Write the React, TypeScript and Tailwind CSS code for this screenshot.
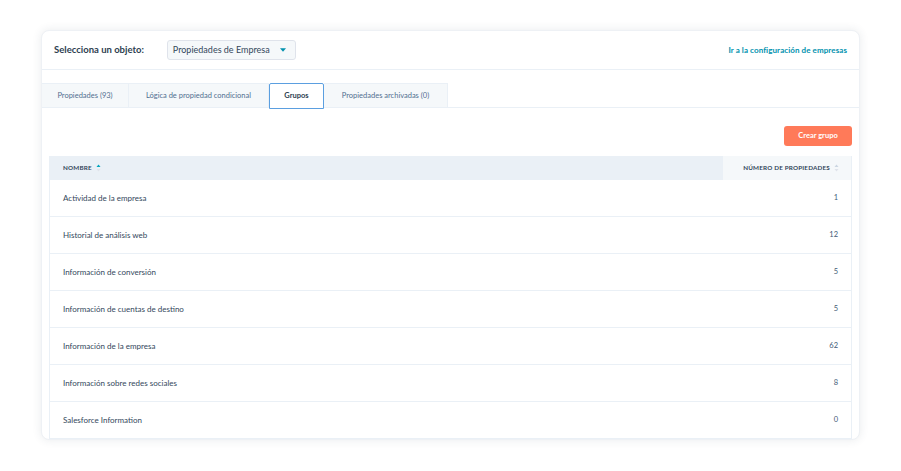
import React from "react";

const rows = [
    { name: "Actividad de la empresa", count: 1 },
    { name: "Historial de análisis web", count: 12 },
    { name: "Información de conversión", count: 5 },
    { name: "Información de cuentas de destino", count: 5 },
    { name: "Información de la empresa", count: 62 },
    { name: "Información sobre redes sociales", count: 8 },
    { name: "Salesforce Information", count: 0 },
];

const tabs = [
    { label: "Propiedades (93)", w: "w-[87px]" },
    { label: "Lógica de propiedad condicional", w: "w-[140px]" },
    { label: "Grupos", w: "w-[55px]", active: true },
    { label: "Propiedades archivadas (0)", w: "w-[124px]" },
];

const SortArrows = ({ up }: { up?: boolean }) => (
    <svg width="5" height="8" viewBox="0 0 5 8" className="ml-[4px]">
        <path d="M2.5 0.5 L4.5 3 L0.5 3 Z" fill={up ? "#00a4bd" : "#cbd6e2"} />
        <path d="M2.5 7.5 L4.5 5 L0.5 5 Z" fill="#dfe3eb" />
    </svg>
);

export default function App() {
    return (
        <div className="w-[901px] h-[471px] bg-white pt-[30px] pl-[41px] text-[#33475b]" style={{ fontFamily: "Lato, 'Noto Sans', sans-serif" }}>
            <div className="w-[819px] h-[410px] bg-white rounded-[8px] border border-[#eef1f5] shadow-[0_0_10px_rgba(40,60,80,0.10)] flex flex-col overflow-hidden">
                {/* header */}
                <div className="h-[39px] shrink-0 flex items-center px-[12px] border-b border-[#eaf0f6]">
                    <span className="text-[9.5px] font-bold text-[#2d3e50]">Selecciona un objeto:</span>
                    <div className="ml-[23px] w-[129px] h-[20px] bg-[#f5f8fa] border border-[#dfe3eb] rounded-[3px] flex items-center pl-[5px] pr-[6px] justify-between">
                        <span className="text-[9px] text-[#33475b]">Propiedades de Empresa</span>
                        <svg width="6" height="4" viewBox="0 0 7 4" className="mr-[3px]">
                            <path d="M0 0 L7 0 L3.5 4 Z" fill="#0091ae" />
                        </svg>
                    </div>
                    <a className="ml-auto text-[8px] font-bold text-[#0091ae] tracking-[0.01em]">Ir a la configuración de empresas</a>
                </div>

                {/* tabs */}
                <div className="mt-[13px] h-[25px] shrink-0 flex border-b border-[#eaf0f6]">
                    {tabs.map((t) =>
                        t.active ? (
                            <div key={t.label} className={`${t.w} h-[26px] -mb-px flex items-center justify-center bg-white border border-[#5b9fe0] rounded-t-[2px] text-[7.5px] font-bold text-[#2d3e50]`}>
                                {t.label}
                            </div>
                        ) : (
                            <div key={t.label} className={`${t.w} h-full flex items-center justify-center bg-[#f5f8fa] border-r border-t border-[#eaf0f6] text-[7.5px] text-[#516f90]`}>
                                {t.label}
                            </div>
                        )
                    )}
                </div>

                {/* body */}
                <div className="px-[7px] flex flex-col flex-1">
                    <div className="flex justify-end mt-[18px]">
                        <button className="w-[68px] h-[20px] rounded-[3px] bg-[#ff7a59] text-white text-[7.5px] font-bold">Crear grupo</button>
                    </div>
                    <div className="mt-[10px] border-l border-r border-[#eaf0f6]">
                        <div className="flex h-[24px]">
                            <div className="flex-1 bg-[#eaf0f6] flex items-center pl-[13px]">
                                <span className="text-[6.3px] font-bold tracking-[0.03em] text-[#33475b]">NOMBRE</span>
                                <SortArrows up />
                            </div>
                            <div className="w-[128px] bg-[#f5f8fa] flex items-center justify-end pr-[12px]">
                                <span className="text-[6.3px] font-bold tracking-[0.03em] text-[#33475b]">NÚMERO DE PROPIEDADES</span>
                                <SortArrows />
                            </div>
                        </div>
                        {rows.map((r) => (
                            <div key={r.name} className="h-[37px] flex items-center justify-between px-[13px] border-b border-[#eaf0f6] text-[8px] text-[#33475b]">
                                <span>{r.name}</span>
                                <span className="text-[7.5px] text-[#425b76]">{r.count}</span>
                            </div>
                        ))}
                    </div>
                </div>
            </div>
        </div>
    );
}
